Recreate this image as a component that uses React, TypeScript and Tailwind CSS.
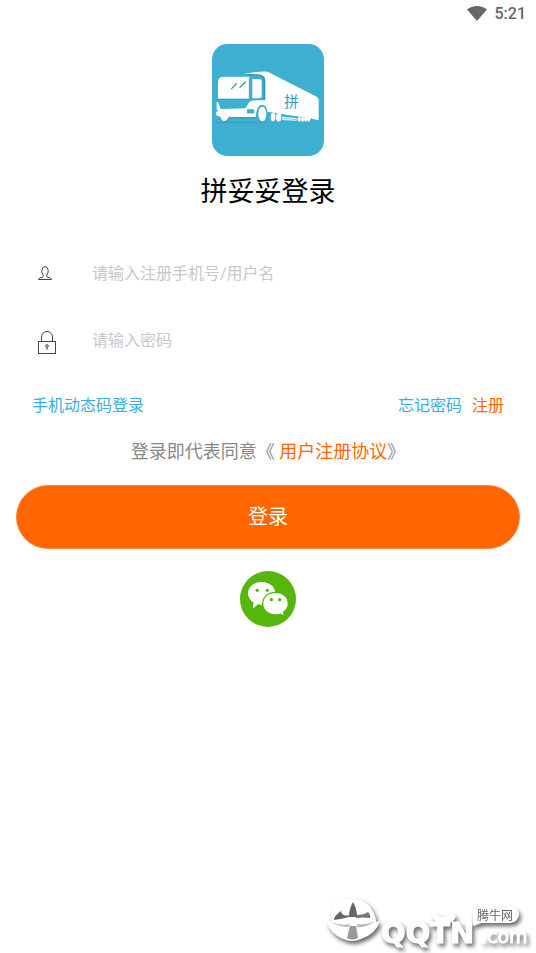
import { useState } from 'react'

const TruckLogo = () => (
  <svg viewBox="36 29 336 336" className="size-28" role="img" aria-label="拼妥妥">
    <rect x="36" y="29" width="336" height="336" rx="46" fill="#3eafd0" />
    <path d="M44 265H190L240 263" stroke="#3193b3" strokeWidth="2" fill="none" />
    {/* trailer */}
    <path d="M132 119Q180 109 203 112L350 187Q356 190 356 198V258L330 252L196 233V136Q194 124 180 123Z" fill="#fff" />
    <path d="M140 121Q170 120 184 124Q193 127 193 140V200" stroke="#2f93b3" strokeWidth="4" fill="none" />
    {/* cab */}
    <path d="M68 127H148V193H54V146Q54 128 68 127Z" fill="#fff" />
    <path d="M157 134H178Q185 134 185 142V189L178 192H157Z" fill="#fff" />
    <path d="M54 195H148V132" stroke="#2f93b3" strokeWidth="2" fill="none" />
    <path d="M95 163L109 148M120 159L137 143" stroke="#2f93b3" strokeWidth="4" strokeLinecap="round" />
    {/* bumper */}
    <path d="M50 202Q56 203 58 212L62 224L136 222L148 203Q154 198 172 198H198V238H203Q200 212 186 212Q170 212 167 248H86Q82 260 74 261Q64 262 61 247L50 244L47 232H53V226H50Z" fill="#fff" />
    <path d="M61 249Q64 263 76 261Q83 259 87 250H166" stroke="#2f93b3" strokeWidth="2" fill="none" />
    <rect x="142" y="226" width="19" height="10" rx="1" fill="#3eafd0" stroke="#2f93b3" strokeWidth="2" />
    {/* wheels */}
    <ellipse cx="187" cy="238" rx="16" ry="27" fill="#3eafd0" />
    <ellipse cx="187" cy="239" rx="12" ry="22" fill="#fff" />
    <path d="M203 232L330 253V268H203Z" fill="#3eafd0" />
    <ellipse cx="219" cy="248" rx="7" ry="13" fill="#fff" />
    <ellipse cx="236" cy="249" rx="8" ry="13" fill="#fff" />
    <path d="M247 247L290 252V259L247 257Z" fill="#fff" />
    <path d="M250 252L288 256" stroke="#3eafd0" strokeWidth="2" />
    {[298, 308, 317, 326].map((x) => (
      <ellipse key={x} cx={x} cy="255" rx="5" ry="7" fill="#fff" />
    ))}
    <text x="253" y="218" fontSize="43" fill="#2f9dbf" className="font-['Noto_Sans_CJK_SC',sans-serif]">拼</text>
  </svg>
)

const UserIcon = () => (
  <svg viewBox="0 0 14 15" className="h-[15px] w-3.5" fill="none" stroke="#444" strokeWidth="1">
    <path d="M5.3 9.5Q3.6 7 3.8 4.2Q4.2 .6 7 .6Q9.8 .6 10.2 4.2Q10.4 7 8.7 9.5Q8.5 11 10 11.3Q13.5 12 13.5 13.5H.5Q.5 12 4 11.3Q5.5 11 5.3 9.5Z" />
  </svg>
)

const LockIcon = () => (
  <svg viewBox="0 0 18 24" className="h-6 w-[18px]" fill="none" stroke="#444" strokeWidth="1">
    <rect x=".5" y="10.5" width="17" height="12" />
    <path d="M3.5 10V6A5.5 5.5 0 0 1 14.5 6V10" />
    <circle cx="9" cy="15" r="1.3" />
    <path d="M9 16V19" />
  </svg>
)

const WechatIcon = () => (
  <svg viewBox="30 33 168 168" className="size-14">
    <circle cx="114" cy="117" r="84" fill="#57b60c" />
    <path d="M95 66C71 66 54 81 54 100C54 112 60 121 71 128L68 146L84 133Q91 135 100 134C121 133 136 119 136 100C136 81 119 66 95 66Z" fill="#fff" />
    <path d="M137 97C114 97 98 112 98 131C98 151 115 165 137 165Q145 165 151 163L163 169L161 156C170 150 175 141 175 131C175 112 159 97 137 97Z" fill="#fff" stroke="#57b60c" strokeWidth="4" />
    <g fill="#57b60c">
      <circle cx="82" cy="91" r="5" />
      <circle cx="112" cy="91" r="5" />
      <circle cx="124" cy="119" r="5" />
      <circle cx="149" cy="119" r="5" />
    </g>
  </svg>
)

const SiteMark = () => (
  <svg viewBox="0 0 216 63" className="h-[63px] w-[216px] drop-shadow-[2px_3px_2px_rgba(0,0,0,0.6)]" role="img" aria-label="腾牛网 QQTN.com">
    <path d="M12 31Q10 20 16 12Q22 8 35 9Q47 10 52 20Q56 26 56 32L60 31Q56 44 41 49Q32 53 23 49Q9 43 7 31Z" fill="#fff" />
    {/* horns */}
    <path d="M21 21Q13 27 14 30Q22 29 29 27L30 25Q22 27 21 21Z" fill="#666" />
    <path d="M36 25Q44 25 48 22Q51 25 50 28Q43 27 36 28Z" fill="#777" />
    <path d="M33 12Q29 19 29 27H37Q37 19 33 12Z" fill="#666" />
    <path d="M11 32Q21 36 30 34L29 37Q19 37 11 32ZM37 34Q47 35 55 31Q47 38 37 37Z" fill="#bbb" />
    <path d="M30 36H36L38 48Q33 51 27 48Z" fill="#999" />
    {/* bull head above the T */}
    <path d="M112 25Q113 34 124 34Q135 34 136 25Q132 22 130 25Q124 29 118 25Q115 22 112 25Z" fill="#fff" />
    <path d="M160 17H191Q199 18 199 25Q198 32 190 33H162L153 36V24Q153 17 160 17Z" fill="#fff" />
    <text x="61" y="53" fontSize="29" fontWeight="700" fill="#fff" stroke="#fff" className="font-['DejaVu_Sans',sans-serif]">QQTN</text>
    <text x="161" y="53" fontSize="19" fill="#fff" stroke="#fff" className="font-['DejaVu_Sans',sans-serif]">.com</text>
    <text x="157" y="30" fontSize="12" fill="#666" className="font-['Noto_Sans_CJK_SC',sans-serif]">腾牛网</text>
  </svg>
)

export default function App() {
  const [account, setAccount] = useState('')
  const [password, setPassword] = useState('')

  return (
    <div className="min-h-screen bg-white flex flex-col font-[Roboto,'Noto_Sans_CJK_SC',sans-serif]">
      {/* Status bar */}
      <header className="h-7 px-2.5 flex items-center justify-end gap-2 text-[#666]">
        <svg viewBox="0 0 20 16" className="h-4 w-5" fill="currentColor">
          <path d="M10 15L0 3.5Q4 0 10 0Q16 0 20 3.5Z" />
        </svg>
        <span className="text-base font-medium">5:21</span>
      </header>

      <main className="px-4 pt-4 flex flex-col items-center">
        <TruckLogo />
        <h1 className="mt-4 text-[27px] leading-10 text-black">拼妥妥登录</h1>

        <form onSubmit={(e) => e.preventDefault()} className="w-full mt-7 flex flex-col">
          <div className="h-[67px] px-5 flex items-center">
            <label htmlFor="account" aria-label="用户名" className="w-14 pl-0.5"><UserIcon /></label>
            <input
              id="account"
              type="text"
              value={account}
              onChange={(e) => setAccount(e.target.value)}
              placeholder="请输入注册手机号/用户名"
              className="flex-1 min-w-0 text-base text-[#333] placeholder-[#c8c8c8] focus:outline-none"
            />
          </div>
          <div className="h-[67px] px-5 flex items-center">
            <label htmlFor="password" aria-label="密码" className="w-14 pl-0.5 pt-1"><LockIcon /></label>
            <input
              id="password"
              type="password"
              value={password}
              onChange={(e) => setPassword(e.target.value)}
              placeholder="请输入密码"
              className="flex-1 min-w-0 text-base text-[#333] placeholder-[#c8c8c8] focus:outline-none"
            />
          </div>

          <div className="mt-5 px-4 flex items-center text-base text-[#3aade0]">
            <a href="#code">手机动态码登录</a>
            <a href="#forgot" className="ml-auto">忘记密码</a>
            <a href="#register" className="ml-2.5 text-[#ff6600]">注册</a>
          </div>

          <p className="mt-5 text-center text-lg leading-7 text-[#888]">
            登录即代表同意《 <a href="#agreement" className="text-[#ff6600]">用户注册协议</a>》
          </p>

          <button type="submit" className="mt-[19px] h-16 rounded-full border border-[#ff8a3c] bg-[#ff6600] text-xl leading-7 text-white">
            登录
          </button>
        </form>

        <button type="button" aria-label="微信登录" className="mt-[22px]">
          <WechatIcon />
        </button>
      </main>

      <footer className="mt-auto flex justify-end">
        <SiteMark />
      </footer>
    </div>
  )
}
